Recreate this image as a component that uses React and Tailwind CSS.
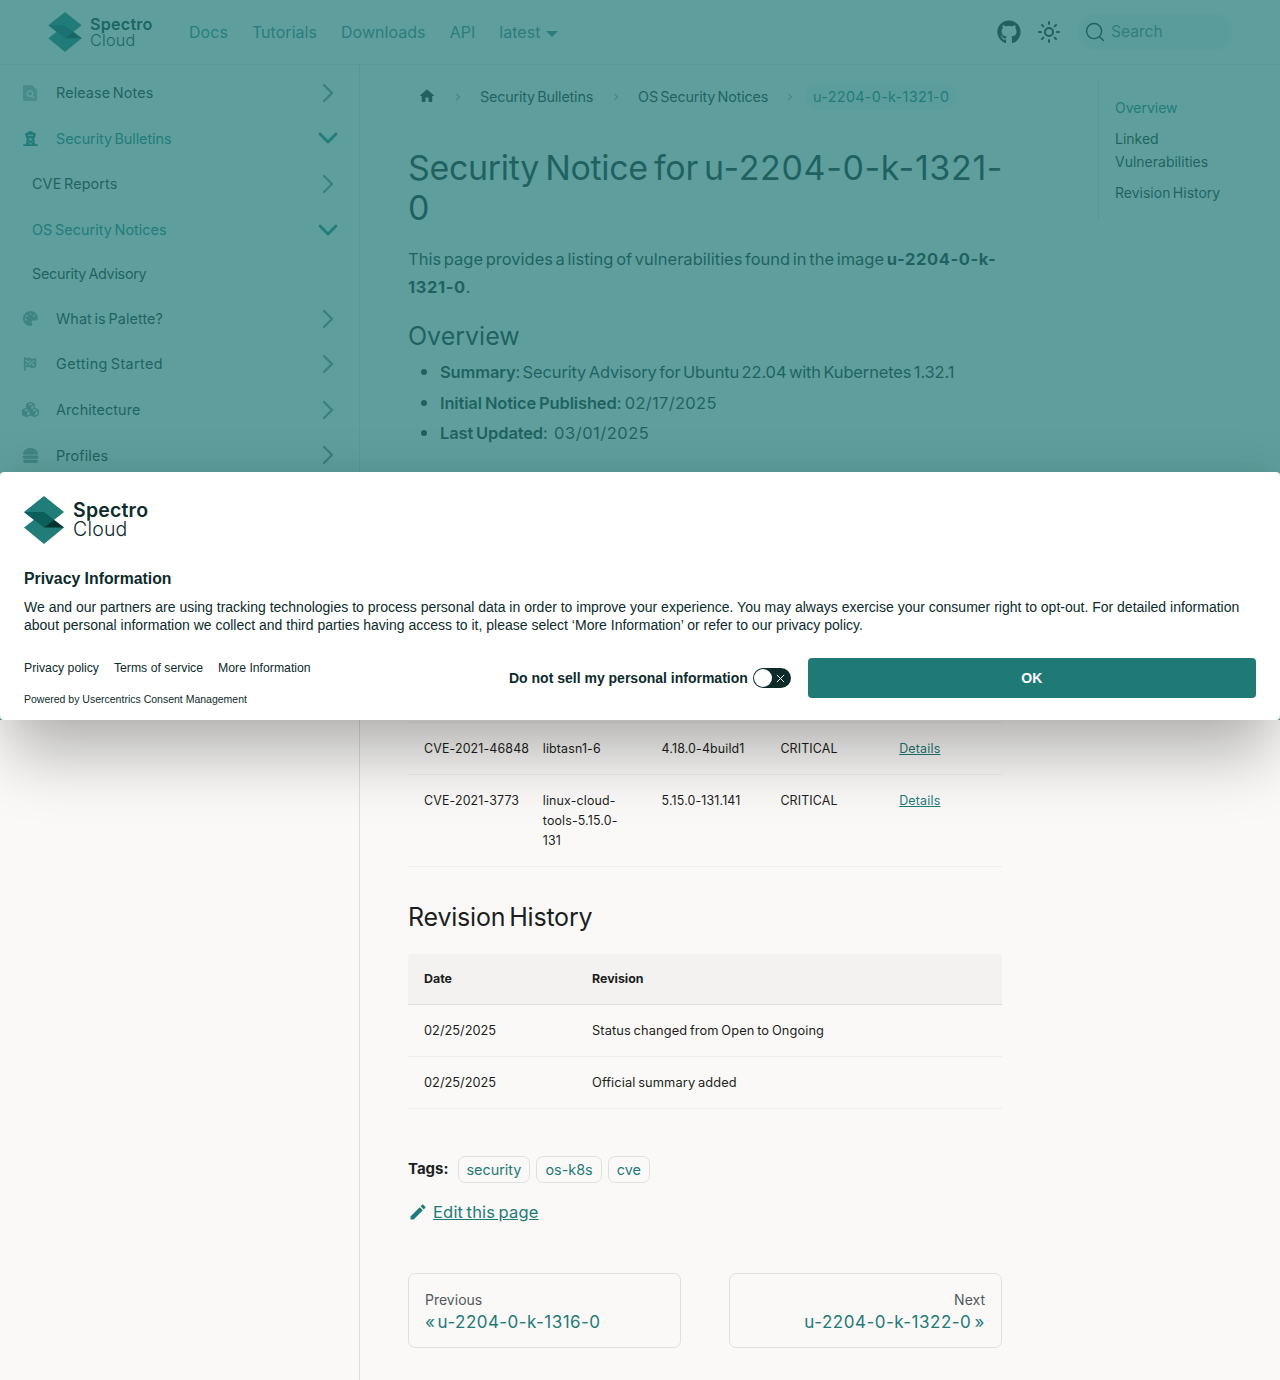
import React from "react";
import { FaGithub, FaPalette, FaFlagCheckered, FaCubes, FaBurger, FaTowerObservation } from "react-icons/fa6";
import { ChevronRight, ChevronDown, Sun } from "lucide-react";

const INTER = "font-['Inter',sans-serif]";

function ReleaseIcon() {
  return (
    <svg viewBox="0 0 14 16" className="w-[14px] h-[16px] text-[#a8b6b6] ml-[1px]" fill="currentColor">
      <path fillRule="evenodd" d="M1.5 0H9l5 5v9.5a1.5 1.5 0 0 1-1.5 1.5h-11A1.5 1.5 0 0 1 0 14.500v-13A1.500 1.500 0 0 1 1.500 0zM7 5a3.500 3.500 0 1 0 1.900 6.400l2 2 1-1-2-2A3.500 3.500 0 0 0 7 5zm0 1.500a2 2 0 1 1 0 4 2 2 0 0 1 0-4z" />
    </svg>
  );
}

function Logo({ className }) {
  return (
    <svg viewBox="0 0 40 48" className={className}>
      <polygon points="20,16 40,31.500 20,48 0,31.500" fill="#217d78" />
      <polygon points="20,0 40,16 20,32 0,16" fill="#217d78" />
      <polygon points="0,16 20,16 30,24 20,31.500" fill="#0b5f5a" />
      <polygon points="20,31.500 30,24 40,31.500" fill="#06332f" />
    </svg>
  );
}

function SideRow({ icon, label, active, open, sub, hasChevron = true, height = "h-[45.600px]", textClass = "tracking-[0.1px]" }) {
  return (
    <div className={`flex items-center ${height} pr-[15px] ${sub ? "pl-[32px]" : "pl-[22px]"}`}>
      {icon && <span className="w-[34px] flex items-center text-[#8d9c9c] shrink-0">{icon}</span>}
      <span className={`flex-1 text-[14.400px] [word-spacing:-1.500px] ${textClass} ${active ? "text-[#1f7a78]" : "text-[#1c1e21]"}`}>{label}</span>
      {hasChevron &&
        (open ? (
          <ChevronDown size={32} strokeWidth={2} className="text-[#1f7a78]" />
        ) : (
          <ChevronRight size={32} strokeWidth={1.800} className="text-[#778c8c]" />
        ))}
    </div>
  );
}

function Row({ cells }) {
  return (
    <div className="grid grid-cols-5 border-b border-[#f0eeec] text-[12.400px] leading-[20px] tracking-[0.15px] text-[#1c1e21]">
      {cells.map((c, i) => (
        <div key={i} className="pl-4 py-[15.500px] whitespace-nowrap">
          {i === 4 ? <span className="underline text-[#1f7a78] tracking-[0.2px]">{c}</span> : c}
        </div>
      ))}
    </div>
  );
}

function Tag({ children }) {
  return <span className="border border-[#dfe0e3] rounded-[7px] px-2 h-[27px] flex items-center text-[14.400px] text-[#1f7a78]">{children}</span>;
}

function App() {
  return (
    <div className={`relative h-[1380px] overflow-hidden bg-[#faf9f7] text-[#1c1e21] ${INTER}`}>
      {/* navbar */}
      <header className="h-[65px] flex items-center border-b border-[#e6e6e6] pl-[48px] pr-[48px]">
        <Logo className="w-[34px] h-[40px]" />
        <div className="ml-[8px] mr-[36px] w-[63px] leading-[16px] whitespace-nowrap tracking-[0.2px] text-[#0d2b2b]">
          <div className="text-[16.200px] font-semibold">Spectro</div>
          <div className="text-[16.200px] font-light">Cloud</div>
        </div>
        <nav className="flex items-center gap-[24px] text-[16px] tracking-[0.04px] text-[#4a7f82]">
          <span className="text-[#2f8a88]">Docs</span>
          <span>Tutorials</span>
          <span>Downloads</span>
          <span>API</span>
          <span className="flex items-center gap-[5px]">
            latest
            <svg viewBox="0 0 12 6" className="w-[12px] h-[6px] mt-[3px]" fill="currentColor"><polygon points="0,0 12,0 6,6" /></svg>
          </span>
        </nav>
        <div className="ml-auto flex items-center">
          <FaGithub size={24} className="text-[#1c1e21]" />
          <Sun size={24} strokeWidth={2} className="ml-[16px] text-[#1c1e21]" />
          <div className="ml-[17px] w-[154px] h-[36px] rounded-full bg-[#ecf1ef] flex items-center pl-[7px] text-[#5a8587]">
            <svg viewBox="0 0 20 20" className="w-[20px] h-[20px]">
              <path d="M14.386 14.386l4.0877 4.0877-4.0877-4.0877c-2.9418 2.9419-7.7115 2.9419-10.6533 0-2.9419-2.9418-2.9419-7.7115 0-10.6533 2.9418-2.9419 7.7115-2.9419 10.6533 0 2.9419 2.9418 2.9419 7.7115 0 10.6533z" stroke="#1c1e21" fill="none" strokeWidth="1.400" strokeLinecap="round" strokeLinejoin="round" />
            </svg>
            <span className="ml-[6px] text-[15.600px]">Search</span>
          </div>
        </div>
      </header>

      <div className="flex h-[1315px]">
        {/* sidebar */}
        <aside className="w-[360px] shrink-0 border-r border-[#dadde1] pt-[5px]">
          <SideRow icon={<ReleaseIcon />} label="Release Notes" />
          <SideRow icon={<FaTowerObservation size={15} className="text-[#1f7a78] ml-[1px]" />} label="Security Bulletins" active open textClass="tracking-[-0.07px]" />
          <SideRow sub label="CVE Reports" />
          <SideRow sub label="OS Security Notices" active open textClass="tracking-[0.05px]" />
          <SideRow sub label="Security Advisory" hasChevron={false} height="h-[43.400px]" textClass="tracking-[-0.3px]" />
          <SideRow icon={<FaPalette size={15} className="ml-[1px]" />} label="What is Palette?" />
          <SideRow icon={<FaFlagCheckered size={14} className="ml-[1px]" />} label="Getting Started" textClass="tracking-[0.4px]" />
          <SideRow icon={<FaCubes size={17} />} label="Architecture" />
          <SideRow icon={<FaBurger size={17} />} label="Profiles" />
        </aside>

        {/* article */}
        <main className="w-[642px] shrink-0 pl-[48px]">
          <div className="w-[594px]">
            <div className="flex items-center h-[26px] mt-[19px] text-[14.400px] tracking-[-0.2px] [word-spacing:-1.500px]">
              <svg viewBox="0 0 24 24" className="w-[18px] h-[18px] ml-[10px] -mt-[2px] shrink-0" fill="#1c1e21">
                <path d="M10 19v-5h4v5c0 .55.45 1 1 1h3c.55 0 1-.45 1-1v-7h1.700c.46 0 .68-.57.33-.87L12.670 3.600c-.38-.34-.96-.34-1.340 0l-8.360 7.530c-.34.300-.13.870.33.870H5v7c0 .55.450 1 1 1h3c.55 0 1-.45 1-1z" />
              </svg>
              <ChevronRight size={12} className="ml-[16px] text-[#5f6c6d] shrink-0" />
              <span className="ml-[16px]">Security Bulletins</span>
              <ChevronRight size={12} className="ml-[17px] text-[#5f6c6d] shrink-0" />
              <span className="ml-[16px]">OS Security Notices</span>
              <ChevronRight size={12} className="ml-[16px] text-[#5f6c6d] shrink-0" />
              <span className="ml-[9px] px-[8px] h-[26px] rounded-full bg-[#f0f3f2] flex items-center text-[#1f7a78] tracking-[0.3px]">u-2204-0-k-1321-0</span>
            </div>
            <h1 className="mt-[38px] text-[34px] leading-[40px] tracking-[-0.33px] [word-spacing:-3px] text-[#1c1e21] whitespace-nowrap">
              Security Notice for <span className="tracking-[0.65px]">u-2204-0-k-1321-</span>
              <br />0
            </h1>
            <p className="mt-[17px] text-[16.500px] leading-[28px] [word-spacing:-2px]">
              This page provides a listing of vulnerabilities found in the image{" "}
              <b className="font-bold tracking-[0.6px]">
                u-2204-0-k-
                <br />1321-0
              </b>
              .
            </p>
            <h2 className="mt-[19px] text-[25px] leading-[32px]">Overview</h2>
            <ul className="mt-[6px] list-disc marker:text-[19px] pl-[32px] text-[16.500px] leading-[28px] tracking-[-0.15px] [word-spacing:-2px]">
              <li className="mb-[2.500px]"><b className="font-semibold">Summary</b>: Security Advisory for Ubuntu 22.04 with Kubernetes 1.32.1</li>
              <li className="mb-[2.500px]"><b className="font-semibold [word-spacing:-1px]">Initial Notice Published</b>: <span className="tracking-[0.3px] ml-[1px]">02/17/2025</span></li>
              <li><b className="font-semibold [word-spacing:-1px]">Last Updated</b>: <span className="tracking-[0.5px] ml-[4px]">03/01/2025</span></li>
            </ul>

            {/* rows above these two are covered by the consent banner */}
            <div className="mt-[275px] border-t border-[#f0eeec]">
              <Row cells={["CVE-2021-46848", "libtasn1-6", "4.18.0-4build1", "CRITICAL", "Details"]} />
              <Row cells={["CVE-2021-3773", <>linux-cloud-<br />tools-5.15.0-<br />131</>, "5.15.0-131.141", "CRITICAL", "Details"]} />
            </div>

            <h2 className="mt-[34px] text-[25px] leading-[32px] tracking-[-0.2px] [word-spacing:-3px]">Revision History</h2>
            <div className="mt-[21px] bg-[#f3f2f1] rounded-t-[4px] grid grid-cols-[168px_1fr] border-b border-[#dadde1] text-[12.400px] font-bold">
              <div className="px-4 py-[15px] leading-[20px]">Date</div>
              <div className="px-4 py-[15px] leading-[20px]">Revision</div>
            </div>
            {[
              ["02/25/2025", "Status changed from Open to Ongoing"],
              ["02/25/2025", "Official summary added"],
            ].map((r, i) => (
              <div key={i} className="grid grid-cols-[168px_1fr] border-b border-[#f0eeec] text-[12.800px] leading-[20px]">
                <div className="px-4 py-[15.500px]">{r[0]}</div>
                <div className="px-4 py-[15.500px] tracking-[0.12px] [word-spacing:-1px]">{r[1]}</div>
              </div>
            ))}

            <div className="mt-[47px] flex items-center gap-[6px]">
              <b className="text-[15px] font-bold mr-[3px]">Tags:</b>
              <Tag>security</Tag>
              <Tag>os-k8s</Tag>
              <Tag>cve</Tag>
            </div>
            <div className="mt-[17px] flex items-center text-[16.500px] tracking-[0.2px] text-[#1f7a78]">
              <svg viewBox="0 0 40 40" className="w-[20px] h-[20px]" fill="currentColor">
                <path d="M34.500 11.700l-3 3.100-6.300-6.300 3.100-3q.5-.5 1.200-.5t1.100.5l3.900 3.900q.5.4.5 1.100t-.5 1.200z m-29.500 17.100l18.400-18.500 6.300 6.300-18.400 18.400h-6.300v-6.200z" />
              </svg>
              <span className="ml-[5px] underline [word-spacing:-1.500px]">Edit this page</span>
            </div>
            <div className="mt-[48px] grid grid-cols-2 gap-[48px]">
              <div className="border border-[#dfe0e3] rounded-[7px] h-[75px] px-4 pt-[3px] flex flex-col justify-center">
                <span className="text-[14px] leading-[20px] text-[#525860]">Previous</span>
                <span className="text-[17px] leading-[24px] text-[#1f7a78] tracking-[0.45px] [word-spacing:-3px]">« u-2204-0-k-1316-0</span>
              </div>
              <div className="border border-[#dfe0e3] rounded-[7px] h-[75px] px-4 pt-[3px] flex flex-col justify-center text-right">
                <span className="text-[14px] leading-[20px] text-[#525860]">Next</span>
                <span className="text-[17px] leading-[24px] text-[#1f7a78] tracking-[0.5px] [word-spacing:-2px]">u-2204-0-k-1322-0 »</span>
              </div>
            </div>
          </div>
        </main>

        {/* toc */}
        <div className="ml-[96px] w-[180px] mt-[15px]">
          <div className="border-l border-[#dadde1] pl-[16px] py-[16px] text-[14px] leading-[23px] h-[140px]">
            <div className="text-[#1f7a78]">Overview</div>
            <div className="mt-[8px]">Linked<br />Vulnerabilities</div>
            <div className="mt-[8px] [word-spacing:-1.500px]">Revision History</div>
          </div>
        </div>
      </div>

      {/* teal scrim that sits behind the banner */}
      <div className="absolute inset-x-0 top-0 h-[720px] bg-[rgba(33,124,122,0.72)]" />

      {/* consent banner */}
      <div className="absolute inset-x-0 top-[472px] h-[248px] bg-white rounded-[4px] shadow-[0_45px_60px_-10px_rgba(0,0,0,0.27),0_-10px_40px_rgba(0,0,0,0.08)] px-[24px] pt-[24px] font-['Liberation_Sans',Arial,sans-serif] text-[#0d2b2b]">
        <div className="flex items-center">
          <Logo className="w-[40px] h-[48px]" />
          <div className="ml-[9px] leading-[19px] -mt-[1px] font-['Inter',sans-serif] text-[#0d2b2b] tracking-[0.2px]">
            <div className="text-[19.500px] font-semibold">Spectro</div>
            <div className="text-[19.500px] font-light">Cloud</div>
          </div>
        </div>
        <h3 className="mt-[25px] text-[15.800px] font-bold leading-[20px]">Privacy Information</h3>
        <p className="mt-[9px] text-[14px] leading-[18px]">
          We and our partners are using tracking technologies to process personal data in order to improve your experience. You may always exercise your consumer right to opt-out. For detailed information about personal information we collect and third parties having access to it, please select ‘More Information’ or refer to our privacy policy.
        </p>
        <div className="flex mt-[15px] items-start">
          <div className="w-[485px] shrink-0">
            <div className="flex gap-[15px] text-[12.250px] leading-[20px] mt-[9px]">
              <span>Privacy policy</span>
              <span>Terms of service</span>
              <span>More Information</span>
            </div>
            <div className="mt-[15px] text-[10.500px] leading-[12px]">Powered by Usercentrics Consent Management</div>
          </div>
          <div className="flex items-center h-[40px] flex-1 mt-[9px]">
            <b className="text-[14px] font-bold">Do not sell my personal information</b>
            <span className="ml-[5px] w-[38px] h-[20px] rounded-full bg-[#0d2b2b] flex items-center justify-between px-[1px]">
              <span className="w-[18px] h-[18px] rounded-full bg-white" />
              <svg viewBox="0 0 10 10" className="w-[9px] h-[9px] mr-[5px]" stroke="white" strokeWidth="1.100"><path d="M1 1l8 8M9 1l-8 8" /></svg>
            </span>
            <button className="ml-[17px] w-[448px] h-[40px] rounded-[4px] bg-[#1f7a76] text-white text-[14px] font-bold">OK</button>
          </div>
        </div>
      </div>
    </div>
  );
}

export default App;
